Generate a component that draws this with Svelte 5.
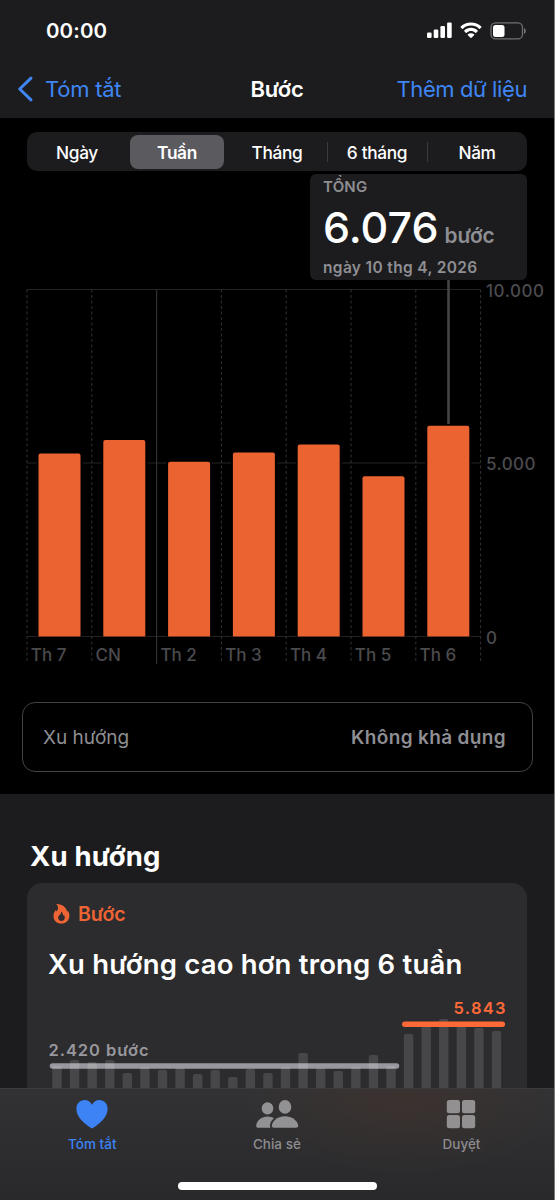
<script>
  const ranges = ["Ngày", "Tuần", "Tháng", "6 tháng", "Năm"];
  let selected = $state(1);

  const days = [
    { label: "Th 7", steps: 5274 },
    { label: "CN", steps: 5660 },
    { label: "Th 2", steps: 5035, weekStart: true },
    { label: "Th 3", steps: 5300 },
    { label: "Th 4", steps: 5530 },
    { label: "Th 5", steps: 4615 },
    { label: "Th 6", steps: 6076 },
  ];

  const ticks = [
    { value: 10000, label: "10.000", width: 58 },
    { value: 5000, label: "5.000", width: 49.5 },
    { value: 0, label: "0", width: 10 },
  ];

  // plot area of the weekly chart
  const left = 27;
  const col = 64.8;
  const right = left + col * 7;
  const top = 9.5;
  const plot = 347;
  const y = (v) => top + plot * (1 - v / 10000);

  // bar heights of the trend card, one per week
  const weeks = [
    22, 28, 26, 28, 15, 21, 18, 20, 14, 18, 11, 19, 15, 21, 35, 20, 17, 21, 33,
    22, 54, 62, 69, 62, 60, 57,
  ];
</script>

<div class="screen">
  <header>
    <div class="status">
      <span class="clock">00:00</span>
      <span class="status-icons">
        <svg class="signal" width="25" height="17" viewBox="0 0 25 17" fill="#fff">
          <rect x="0" y="10.5" width="4.6" height="5.5" rx="1.2" />
          <rect x="6.7" y="7.5" width="4.6" height="8.5" rx="1.2" />
          <rect x="13.4" y="4" width="4.6" height="12" rx="1.2" />
          <rect x="20.1" y="0.4" width="4.6" height="15.6" rx="1.2" />
        </svg>
        <svg class="wifi" width="22" height="17" viewBox="0 0 22 17" fill="#fff">
          <path d="M11 .4C15 .4 18.6 1.9 21.3 4.5c.3.3.3.6 0 .9l-1.4 1.4c-.3.3-.6.3-.9 0C16.9 4.8 14.1 3.6 11 3.6S5.100 4.800 3 6.800c-.3.3-.6.3-.9 0L.7 5.400c-.3-.3-.3-.6 0-.9C3.400 1.900 7 .4 11 .4z" />
          <path d="M11 5.800c2.600 0 4.900 1 6.700 2.600.3.3.3.6 0 .9l-1.500 1.500c-.3.3-.6.3-.9 0C14.100 9.700 12.600 9.100 11 9.100s-3.100.6-4.300 1.700c-.3.3-.6.300-.9 0L4.300 9.300c-.3-.3-.3-.6 0-.9C6.100 6.800 8.400 5.800 11 5.800z" />
          <path d="M11 11.200c1.200 0 2.300.4 3.100 1.100.3.3.3.6 0 .9l-2.600 2.600c-.3.3-.7.3-1 0l-2.600-2.600c-.3-.3-.3-.6 0-.9.8-.7 1.900-1.100 3.100-1.100z" />
        </svg>
        <svg class="battery" width="37" height="18" viewBox="0 0 37 18">
          <rect x="1" y="0.9" width="31.500" height="16" rx="4.5" fill="none" stroke="#707072" stroke-width="1.3" />
          <rect x="3" y="3" width="11.500" height="12" rx="2.500" fill="#fff" />
          <path d="M34 6v6c1.200-.5 1.900-1.600 1.900-3S35.200 6.500 34 6z" fill="#707072" />
        </svg>
      </span>
    </div>
    <nav>
      <button class="back">
        <svg width="17" height="26" viewBox="0 0 17 26">
          <path d="M14 2.200L2.700 13 14 23.800" fill="none" stroke="#3f86f4" stroke-width="3" stroke-linecap="round" stroke-linejoin="round" />
        </svg>
        <span>Tóm tắt</span>
      </button>
      <h1>Bước</h1>
      <button class="add">Thêm dữ liệu</button>
    </nav>
  </header>

  <main>
    <div class="segments">
      {#each ranges as range, i}
        <button
          class="segment"
          class:active={i === selected}
          class:divided={i > 1 && i - 1 !== selected && i !== selected}
          onclick={() => (selected = i)}
        >
          <span>{range}</span>
        </button>
      {/each}
    </div>

    <div class="callout">
      <div class="callout-title">TỔNG</div>
      <div class="callout-value"><b>6.076</b><span>bước</span></div>
      <div class="callout-date">ngày 10 thg 4, 2026</div>
    </div>

    <svg class="chart" width="554" height="390" viewBox="0 0 554 390">
      {#each ticks as tick}
        <line class="grid" x1={left} x2={right} y1={y(tick.value)} y2={y(tick.value)} />
        <text class="tick" x="486" y={y(tick.value) + 7} textLength={tick.width}>{tick.label}</text>
      {/each}
      {#each days as day, i}
        <line
          class={day.weekStart ? "week" : "day"}
          x1={left + col * i}
          x2={left + col * i}
          y1={top}
          y2={day.weekStart ? 384 : 382}
        />
        <text class="tick" x={left + col * i + 3.800} y="380.500">{day.label}</text>
      {/each}
      <line class="day" x1={right} x2={right} y1={top} y2="382" />
      <line class="marker" x1="448.500" x2="448.500" y1="0" y2="144" />
      {#each days as day, i}
        {@const x = left + col * i + 11.500}
        <rect x={x - 2} y={y(day.steps)} width="46" height={y(0) - y(day.steps)} fill="#000" />
        <path
          fill="#ec6332"
          d="M{x} {y(0)}V{y(day.steps) + 2}q0 -2 2 -2h38q2 0 2 2V{y(0)}z"
        />
      {/each}
    </svg>

    <div class="trend-row">
      <span>Xu hướng</span>
      <strong>Không khả dụng</strong>
    </div>
  </main>

  <section>
    <h2>Xu hướng</h2>
    <article>
      <div class="card-head">
        <svg width="17" height="20" viewBox="0 0 17 20">
          <path fill="#ee6434" fill-rule="evenodd" d="M3.600.6C3.200.3 3.500 0 4 0c5.600.3 9.300 3.600 9.900 7.200.1.500.500.500.600.100.1-.4.200-.8.500-.4 1 1.400 1.400 3 1.400 4.900 0 4.500-3.300 7.800-8 7.800-4.600 0-7.900-3-7.900-7.400 0-2.300.8-4 1.900-5.700.4-.6.800-.3.900.2.1.5.300.7.700.3C5.300 5.300 5.700 2.600 3.600.6zM8.600 7.800c-.2-.3-.5-.2-.5.200.1 1.500-.5 2.300-1.500 3.100-.8.700-1.400 1.500-1.400 2.700 0 1.900 1.400 3.100 3.300 3.100 2 0 3.300-1.300 3.300-3.200 0-1.100-.3-1.900-.8-2.600-.2-.3-.4-.2-.5.100-.1.400-.4.400-.5 0-.2-1.400-.5-2.500-1.400-3.400z" />
        </svg>
        <span>Bước</span>
      </div>
      <h3>Xu hướng cao hơn trong 6 tuần</h3>
      <svg class="trend" width="500" height="94" viewBox="0 0 500 94">
        <text class="average" x="21.500" y="61.500" textLength="100">2.420 bước</text>
        <line x1="25.500" x2="369.500" y1="72" y2="72" stroke="#98979d" stroke-width="5.500" stroke-linecap="round" />
        {#each weeks as h, i}
          <rect class="week-bar" x={25.300 + i * 17.580} y={94 - h} width="9.400" height={h + 6} rx="2" />
        {/each}
        <line x1="377.800" x2="475.300" y1="30.300" y2="30.300" stroke="#ff6938" stroke-width="5.500" stroke-linecap="round" />
        <text class="current" x="426.500" y="20" textLength="52">5.843</text>
      </svg>
    </article>
  </section>

  <footer>
    <div class="tabs">
      <button class="tab current-tab">
        <svg width="32" height="30" viewBox="0 0 32 30">
          <path fill="#3d83f6" d="M16 29.300c-.4 0-.8-.3-1.300-.6C6.300 23.400.4 17 .4 10 .4 4.900 3.900 1.100 8.500 1.100c3.300 0 6 1.700 7.500 4.600 1.500-2.900 4.200-4.600 7.500-4.600 4.600 0 8.100 3.800 8.100 8.900 0 7-5.900 13.400-14.300 18.700-.5.3-.9.600-1.300.600z" />
        </svg>
        <span>Tóm tắt</span>
      </button>
      <button class="tab">
        <svg width="44" height="30" viewBox="0 0 44 30" fill="#929194">
          <ellipse cx="12.500" cy="9.400" rx="5.800" ry="6.200" />
          <path d="M3.400 28.700c-1.500 0-2.200-.7-2.200-1.800 0-4.300 4.400-9.500 11.300-9.500 2.600 0 4.800.7 6.500 1.900-2.700 2.200-4 4.900-4 7.400 0 .8.100 1.400.5 2z" />
          <ellipse cx="30" cy="7.900" rx="6.300" ry="6.900" />
          <path d="M19.200 28.700c-1.700 0-2.400-.7-2.400-1.700 0-3.900 4.800-9.700 13.200-9.700s13.200 5.800 13.200 9.700c0 1-.7 1.700-2.400 1.700z" />
        </svg>
        <span>Chia sẻ</span>
      </button>
      <button class="tab">
        <svg width="30" height="30" viewBox="0 0 30 30" fill="#929090">
          <rect x="0.800" y="1" width="13.200" height="13.200" rx="2.500" />
          <rect x="16" y="1" width="13.200" height="13.200" rx="2.500" />
          <rect x="0.800" y="16" width="13.200" height="13.200" rx="2.500" />
          <rect x="16" y="16" width="13.200" height="13.200" rx="2.500" />
        </svg>
        <span>Duyệt</span>
      </button>
    </div>
    <div class="home"></div>
  </footer>
</div>

<style>
  :global(body) {
    background: #000;
  }

  .screen {
    box-sizing: border-box;
    width: 555px;
    height: 1200px;
    overflow: hidden;
    display: flex;
    flex-direction: column;
    background: #000;
    border-right: 1px solid #7a7a7a;
    color: #fff;
    font-family: Inter, "Liberation Sans", sans-serif;
  }

  button {
    border: 0;
    padding: 0;
    background: none;
    color: inherit;
    font: inherit;
    letter-spacing: inherit;
    white-space: nowrap;
    cursor: pointer;
  }

  svg {
    display: block;
    flex: none;
  }

  h1,
  h2,
  h3 {
    margin: 0;
    white-space: nowrap;
  }

  header {
    height: 118px;
    background: #1c1c1e;
  }

  .status {
    display: flex;
    justify-content: space-between;
    align-items: center;
    height: 61px;
    padding: 0 27px 0 46px;
  }

  .clock {
    font-size: 20.5px;
    font-weight: 600;
    letter-spacing: 0.1px;
  }

  .status-icons {
    display: flex;
    align-items: center;
    gap: 8px;
  }

  nav {
    display: grid;
    grid-template-columns: 1fr auto 1fr;
    align-items: center;
    height: 55px;
    padding: 0 27px;
    font-size: 22px;
    letter-spacing: -0.4px;
    color: #3f86f4;
  }

  .back {
    display: flex;
    align-items: center;
    gap: 11px;
    margin-left: -10px;
    letter-spacing: -0.25px;
  }

  h1 {
    font-size: 22px;
    font-weight: 600;
    letter-spacing: -0.2px;
    color: #fff;
  }

  .add {
    justify-self: end;
  }

  main {
    display: flex;
    flex-direction: column;
    height: 676px;
  }

  .segments {
    box-sizing: border-box;
    display: grid;
    grid-template-columns: repeat(5, 1fr);
    width: 500px;
    height: 39px;
    margin: 14px 0 0 27px;
    padding: 3px 0 2px;
    border-radius: 10px;
    background: #1c1c1f;
  }

  .segment {
    position: relative;
    margin: 0 3px;
    border-radius: 8px;
    font-size: 17.3px;
    font-weight: 500;
    letter-spacing: -0.35px;
  }

  .segment.active {
    background: #5b5a5f;
    font-weight: 600;
  }

  .segment.divided::before {
    content: "";
    position: absolute;
    left: -3px;
    top: 7px;
    width: 1px;
    height: 20px;
    background: #3b3b3e;
  }

  .callout {
    box-sizing: border-box;
    width: 217px;
    height: 106px;
    margin: 3px 0 0 310px;
    padding: 4px 13px 0;
    border-radius: 6px;
    background: #1c1c1e;
    color: #8e8e93;
    font-weight: 600;
    white-space: nowrap;
  }

  .callout-title {
    font-size: 15px;
    line-height: 18px;
    letter-spacing: 0.2px;
  }

  .callout-value {
    display: flex;
    align-items: baseline;
    gap: 6px;
    height: 62px;
    line-height: 62px;
    font-size: 20.8px;
  }

  .callout-value b {
    color: #fff;
    font-size: 43px;
    font-weight: 500;
  }

  .callout-date {
    font-size: 15.5px;
    line-height: 19px;
    letter-spacing: 0.35px;
  }

  .grid {
    stroke: #242426;
    stroke-width: 1;
  }

  .day {
    stroke: #303032;
    stroke-width: 1;
    stroke-dasharray: 3 2.5;
  }

  .week {
    stroke: #303032;
    stroke-width: 1.2;
  }

  .marker {
    stroke: #454547;
    stroke-width: 2.6;
  }

  .tick {
    fill: #4b4b4e;
    font-size: 17px;
    font-weight: 500;
  }

  .trend-row {
    box-sizing: border-box;
    display: flex;
    align-items: center;
    justify-content: space-between;
    width: 511px;
    height: 70px;
    margin: 32px 0 0 22px;
    padding: 0 26px 0 20px;
    border: 1px solid #434345;
    border-radius: 13px;
    color: #8e8e93;
    font-size: 19px;
  }

  .trend-row strong {
    font-weight: 600;
    letter-spacing: 0.35px;
  }

  section {
    box-sizing: border-box;
    height: 294px;
    padding: 44px 27px 0;
    background: #1c1c1e;
    overflow: hidden;
  }

  h2 {
    padding-left: 3px;
    font-size: 27.5px;
    line-height: 37px;
    font-weight: 700;
    letter-spacing: 0.2px;
  }

  article {
    width: 500px;
    height: 230px;
    margin-top: 8px;
    border-radius: 15px;
    background: #2c2c2e;
  }

  .card-head {
    display: flex;
    align-items: center;
    gap: 8px;
    height: 62px;
    padding-left: 26px;
    color: #ee6434;
    font-size: 19.5px;
    font-weight: 600;
  }

  h3 {
    height: 49px;
    padding-left: 21px;
    font-size: 27.5px;
    line-height: 39px;
    font-weight: 600;
    letter-spacing: 0.19px;
  }

  .average,
  .current {
    font-size: 16.5px;
    font-weight: 600;
    fill: #98979d;
  }

  .current {
    fill: #ff6938;
  }

  .week-bar {
    fill: rgba(255, 255, 255, 0.13);
  }

  footer {
    box-sizing: border-box;
    height: 112px;
    border-top: 1px solid #3b3b3d;
    background:
      radial-gradient(ellipse 160px 75px at 405px 10px, rgba(74, 52, 44, 0.42), transparent),
      linear-gradient(#323234, #29292b);
  }

  .tabs {
    display: grid;
    grid-template-columns: repeat(3, 184.6px);
    height: 93px;
  }

  .tab {
    display: flex;
    flex-direction: column;
    align-items: center;
    gap: 6px;
    padding-top: 10px;
    color: #8d8c8f;
    font-size: 13.5px;
    line-height: 18px;
    font-weight: 500;
  }

  .current-tab {
    color: #3d83f6;
  }

  .home {
    width: 199px;
    height: 8px;
    margin: 0 auto;
    border-radius: 4px;
    background: #fff;
  }
</style>
